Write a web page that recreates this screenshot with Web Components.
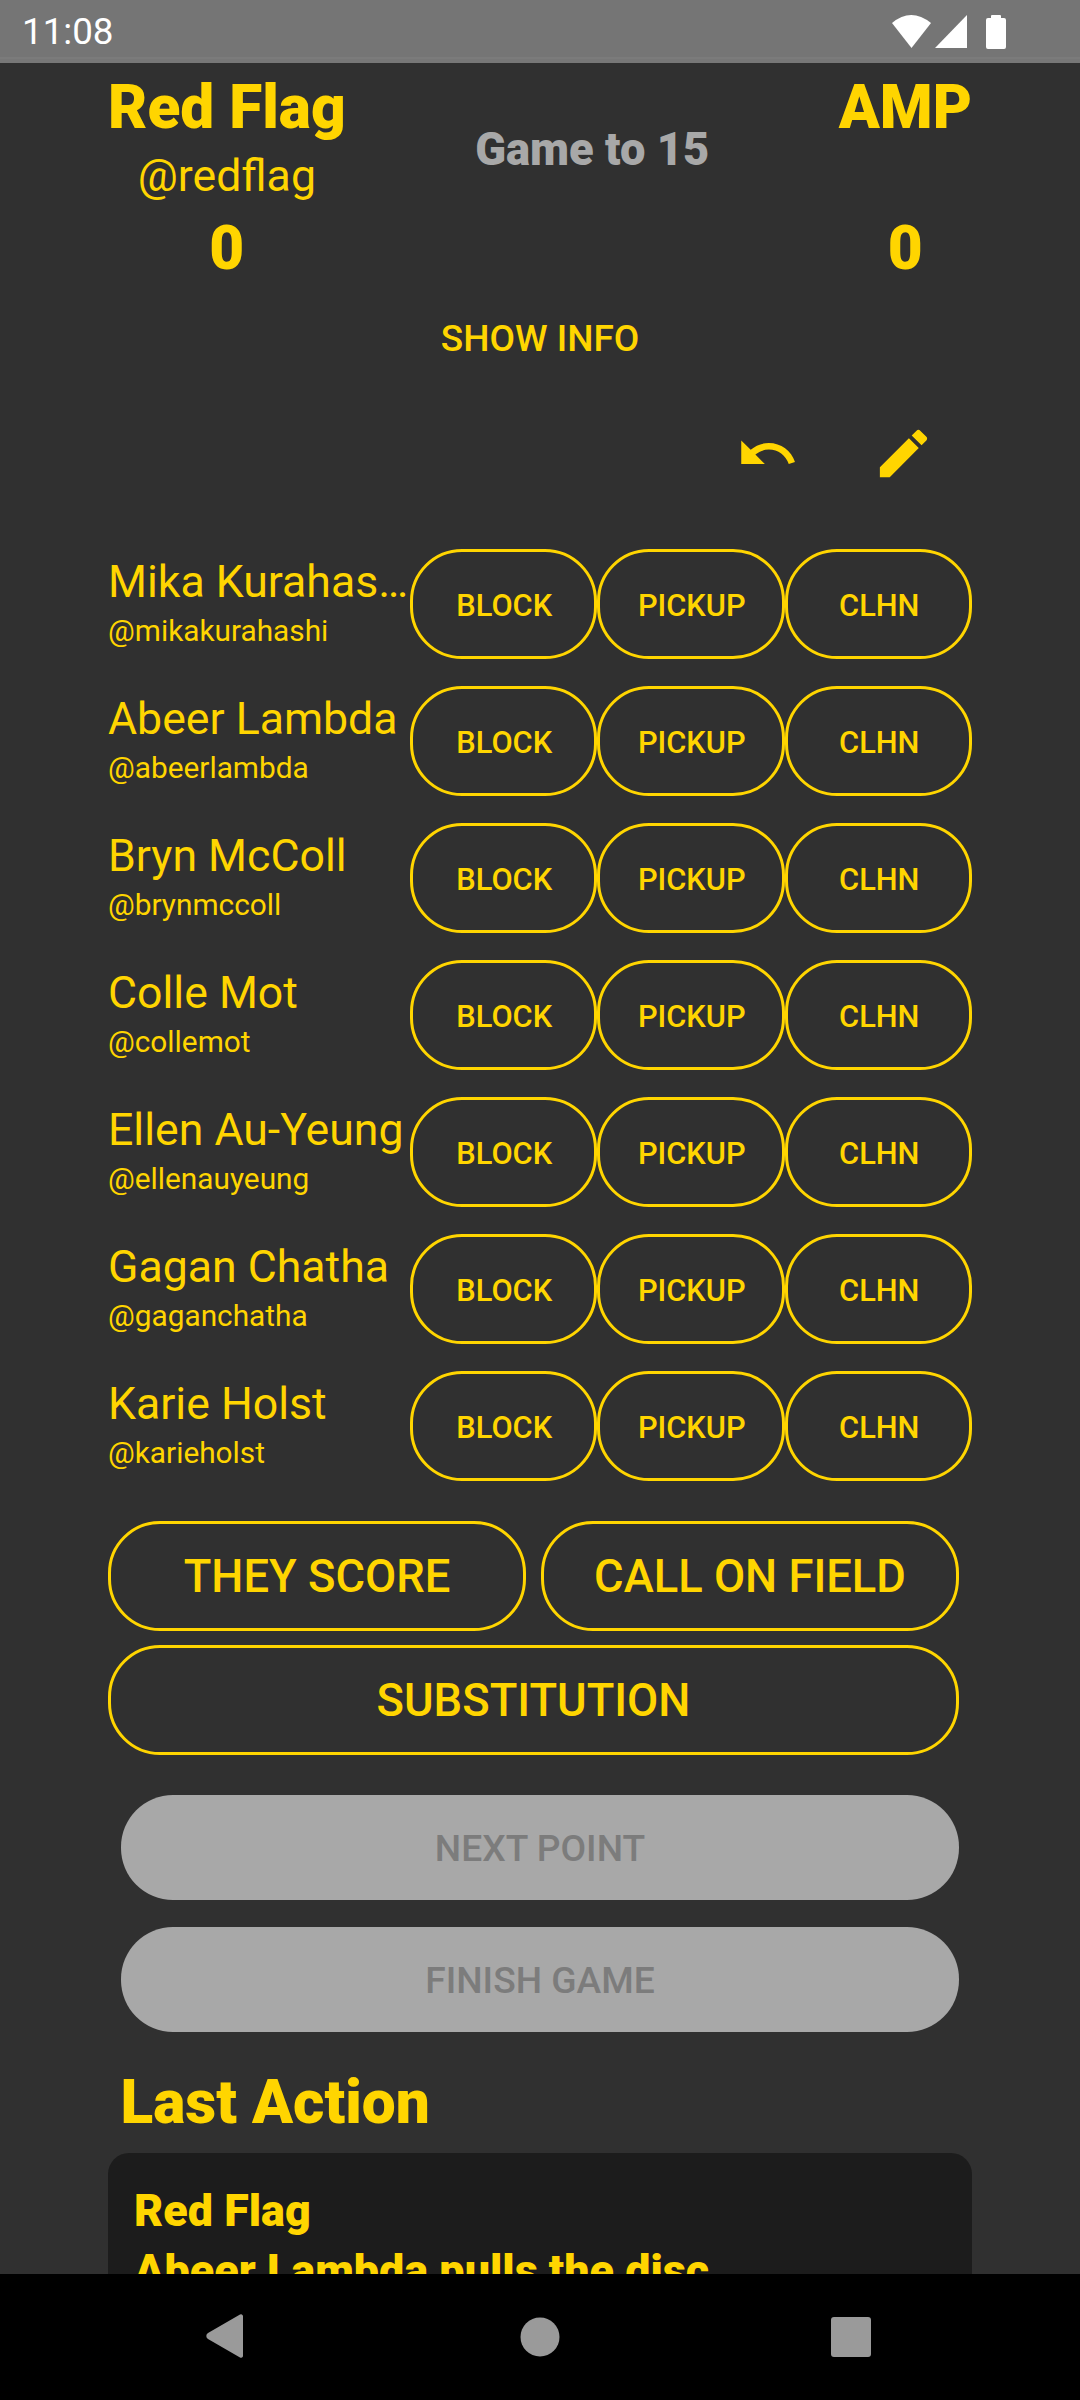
<!DOCTYPE html>
<html>
<head>
<meta charset="utf-8">
<style>
  html, body { margin: 0; height: 100%; background: #303030; }
  body { font-family: Roboto, "Liberation Sans", sans-serif; color: #ffd500; }
</style>
</head>
<body>
<game-screen>
  <status-bar slot="top"></status-bar>
  <score-header team="Red Flag" handle="@redflag" opponent="AMP" target="Game to 15"></score-header>
  <tool-row></tool-row>
  <player-row name="Mika Kurahashi" handle="@mikakurahashi"></player-row>
  <player-row name="Abeer Lambda" handle="@abeerlambda"></player-row>
  <player-row name="Bryn McColl" handle="@brynmccoll"></player-row>
  <player-row name="Colle Mot" handle="@collemot"></player-row>
  <player-row name="Ellen Au-Yeung" handle="@ellenauyeung"></player-row>
  <player-row name="Gagan Chatha" handle="@gaganchatha"></player-row>
  <player-row name="Karie Holst" handle="@karieholst"></player-row>
  <event-buttons></event-buttons>
  <pill-button disabled>NEXT POINT</pill-button>
  <pill-button disabled>FINISH GAME</pill-button>
  <last-action team="Red Flag" text="Abeer Lambda pulls the disc"></last-action>
  <nav-bar slot="bottom"></nav-bar>
</game-screen>

<script>
const YELLOW = '#ffd500';

class GameScreen extends HTMLElement {
  constructor() {
    super();
    this.attachShadow({ mode: 'open' }).innerHTML = `
<style>
  :host { display: flex; flex-direction: column; height: 2400px; overflow: hidden; }
  #content { flex: 1; min-height: 0; overflow: hidden; }
</style>
<slot name="top"></slot>
<div id="content"><slot></slot></div>
<slot name="bottom"></slot>`;
  }
}
customElements.define('game-screen', GameScreen);

class StatusBar extends HTMLElement {
  constructor() {
    super();
    this.attachShadow({ mode: 'open' }).innerHTML = `
<style>
  :host { display: flex; align-items: center; height: 63px; color: #fff;
    background: linear-gradient(#757575 57px, #7b7b7b 57px, #7b7b7b 59px, #777 59px);
    padding: 0 74px 0 22px; box-sizing: border-box; }
  span { font-size: 36.75px; flex: 1; margin-top: -1px; }
  svg { display: block; }
</style>
<span>11:08</span>
<svg width="116" height="36" viewBox="0 0 116 36">
  <path d="M2 9 Q21 -7 41 9 L21.5 34 Z" fill="#fff"/>
  <path d="M77 1 V34 H45 Z" fill="#fff"/>
  <path d="M101 4 V2 a1 1 0 0 1 1 -1 h8 a1 1 0 0 1 1 1 V4 h3 a2 2 0 0 1 2 2 V33 a2 2 0 0 1 -2 2 H98 a2 2 0 0 1 -2 -2 V6 a2 2 0 0 1 2 -2 Z" fill="#fff"/>
</svg>`;
  }
}
customElements.define('status-bar', StatusBar);

class NavBar extends HTMLElement {
  constructor() {
    super();
    this.attachShadow({ mode: 'open' }).innerHTML = `
<style>
  :host { display: block; height: 126px; background: #000; flex: none; }
  svg { display: block; }
</style>
<svg width="1080" height="126" viewBox="0 0 1080 126" fill="#9a9a9a">
  <path d="M243 42 V82 a2 2 0 0 1 -3 1.5 L208 65 a3.5 3.5 0 0 1 0 -6 L240 40.500 a2 2 0 0 1 3 1.500 Z"/>
  <circle cx="540" cy="63" r="19.500"/>
  <rect x="831" y="43" width="40" height="40" rx="3"/>
</svg>`;
  }
}
customElements.define('nav-bar', NavBar);

class ScoreHeader extends HTMLElement {
  constructor() {
    super();
    const team = this.getAttribute('team');
    const handle = this.getAttribute('handle');
    const opponent = this.getAttribute('opponent');
    const target = this.getAttribute('target');
    this.attachShadow({ mode: 'open' }).innerHTML = `
<style>
  :host { display: block; padding: 10.5px 108px 0; }
  #teams { display: flex; justify-content: space-between; align-items: flex-start; }
  .side { display: flex; flex-direction: column; align-items: center; }
  .name, .score { font-size: 60.375px; font-weight: 900; line-height: 68px; }
  .handle { font-size: 44.625px; line-height: 55px; height: 55px; margin-top: 7.5px; }
  .score { margin-top: 10.5px; }
  #target { font-size: 45.3px; font-weight: 900; line-height: 50px; color: #a8a8a8; margin-top: 51px; }
  #info { text-align: center; font-size: 37px; font-weight: 500; line-height: 44px; margin: 34.5px 0 0; }
</style>
<div id="teams">
  <div class="side">
    <div class="name">${team}</div>
    <div class="handle">${handle}</div>
    <div class="score">0</div>
  </div>
  <div id="target">${target}</div>
  <div class="side">
    <div class="name">${opponent}</div>
    <div class="handle"></div>
    <div class="score">0</div>
  </div>
</div>
<div id="info">SHOW INFO</div>`;
  }
}
customElements.define('score-header', ScoreHeader);

class ToolRow extends HTMLElement {
  constructor() {
    super();
    this.attachShadow({ mode: 'open' }).innerHTML = `
<style>
  :host { display: flex; justify-content: flex-end; gap: 73px; padding-right: 145.5px; margin-top: 60.5px; margin-bottom: 64.5px; }
  svg { width: 63px; height: 63px; fill: ${YELLOW}; display: block; }
</style>
<svg viewBox="0 0 24 24"><path d="M12.5 8c-2.65 0-5.05.99-6.9 2.6L2 7v9h9l-3.62-3.62c1.39-1.16 3.16-1.88 5.12-1.88 3.54 0 6.55 2.31 7.6 5.5l2.37-.78C21.08 11.03 17.15 8 12.5 8z"/></svg>
<svg viewBox="0 0 24 24"><path d="M3 17.25V21h3.75L17.81 9.94l-3.75-3.75L3 17.25zM20.71 7.04c.39-.39.39-1.02 0-1.41l-2.34-2.34c-.39-.39-1.02-.39-1.41 0l-1.83 1.83 3.75 3.75 1.83-1.83z"/></svg>`;
  }
}
customElements.define('tool-row', ToolRow);

class PlayerRow extends HTMLElement {
  constructor() {
    super();
    const name = this.getAttribute('name');
    const handle = this.getAttribute('handle');
    this.attachShadow({ mode: 'open' }).innerHTML = `
<style>
  :host { display: flex; align-items: center; height: 110px; margin: 0 108px 27px; }
  #who { flex: 1; min-width: 0; padding-bottom: 4px; margin-right: -2px; }
  #name { font-size: 44.625px; line-height: 52px; white-space: nowrap; overflow: hidden; text-overflow: ellipsis; }
  #handle { font-size: 29.800px; line-height: 35px; margin-top: 5px; }
  #btns { display: flex; flex: none; }
  pill-button { width: 187.5px; margin: 0; }
</style>
<div id="who"><div id="name">${name}</div><div id="handle">${handle}</div></div>
<div id="btns">
  <pill-button small>BLOCK</pill-button>
  <pill-button small>PICKUP</pill-button>
  <pill-button small>CLHN</pill-button>
</div>`;
  }
}
customElements.define('player-row', PlayerRow);

class PillButton extends HTMLElement {
  constructor() {
    super();
    this.attachShadow({ mode: 'open' }).innerHTML = `
<style>
  :host { display: flex; align-items: center; justify-content: center; box-sizing: border-box;
    height: 110px; border: 3px solid ${YELLOW}; border-radius: 52px; font-size: 45.3px; font-weight: 500; color: ${YELLOW}; }
  :host([small]) { font-size: 30.8px; padding: 2px 0 0 2px; }
  :host([disabled]) { height: 105px; border: 0; background: #a8a8a8; color: #7c7c7c; font-size: 37.2px;
    font-weight: 500; padding-top: 2px; margin: 0 121px 27px 121px; }
</style>
<slot></slot>`;
  }
}
customElements.define('pill-button', PillButton);

class EventButtons extends HTMLElement {
  constructor() {
    super();
    this.attachShadow({ mode: 'open' }).innerHTML = `
<style>
  :host { display: grid; grid-template-columns: 418px 418px; gap: 14px 15px; margin: 40px 121px 39.5px 108px; }
  #sub { grid-column: 1 / 3; }
</style>
<pill-button>THEY SCORE</pill-button>
<pill-button>CALL ON FIELD</pill-button>
<pill-button id="sub">SUBSTITUTION</pill-button>`;
  }
}
customElements.define('event-buttons', EventButtons);

class LastAction extends HTMLElement {
  constructor() {
    super();
    const team = this.getAttribute('team');
    const text = this.getAttribute('text');
    this.attachShadow({ mode: 'open' }).innerHTML = `
<style>
  :host { display: block; margin: 35px 108px 0; }
  h2 { margin: 0 0 0 12.5px; font-size: 60.375px; line-height: 71px; font-weight: 900; }
  #card { background: #1c1c1c; border-radius: 21px; margin-top: 15px; padding: 28px 26px; font-size: 44.9px; font-weight: 900; }
  #card div { line-height: 60px; }
</style>
<h2>Last Action</h2>
<div id="card"><div>${team}</div><div>${text}</div></div>`;
  }
}
customElements.define('last-action', LastAction);
</script>
</body>
</html>
